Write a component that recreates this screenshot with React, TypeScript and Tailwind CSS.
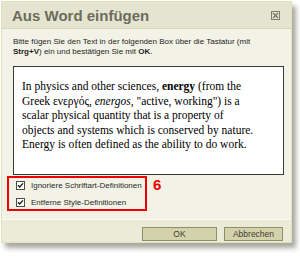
import React from 'react';

const CheckBox: React.FC = () => (
  <span className="w-[9px] h-[9px] border border-[#4d4d44] bg-white flex items-center justify-center shrink-0">
    <svg width="7" height="7" viewBox="0 0 7 7">
      <path d="M1 3.3 L2.7 5 L6 1.4" stroke="#1e1e1e" strokeWidth="1.4" fill="none" />
    </svg>
  </span>
);

const App: React.FC = () => {
  return (
    <div className="w-[300px] h-[258px] bg-white pt-[1px] pl-[1px] font-['Liberation_Sans',Arial,sans-serif]">
      <div className="w-[291px] h-[242px] flex flex-col bg-[#f3f2e6] border border-[#dfe3bd] shadow-[4px_5px_5px_rgba(60,60,40,0.45)]">
        {/* Title bar */}
        <div className="h-[27px] shrink-0 bg-[#e5e4d1] border-b border-dotted border-[#c9c9a6] flex items-center justify-between pl-[10px] pr-[11px]">
          <span className="text-[15px] font-bold text-[#6c6c5c] leading-none">Aus Word einfügen</span>
          <span className="w-[9px] h-[9px] border border-[#7f7f70] flex items-center justify-center">
            <svg width="7" height="7" viewBox="0 0 7 7">
              <path d="M1 1 L6 6 M6 1 L1 6" stroke="#6f6f60" strokeWidth="1.2" />
            </svg>
          </span>
        </div>

        {/* Body */}
        <div className="flex-1 pl-[11px] pr-[7px] pt-[8px]">
          <p className="text-[8px] leading-[9.5px] text-[#1f1f1f]">
            Bitte fügen Sie den Text in der folgenden Box über die Tastatur (mit
            <br />
            <b>Strg+V</b>) ein und bestätigen Sie mit <b>OK</b>.
          </p>
          <div className="mt-[10px] h-[109px] border border-[#3a3a36] bg-white pl-[8px] pt-[12px] font-['Liberation_Serif','Times_New_Roman',serif] text-[11.5px] leading-[14.5px] text-black">
            In physics and other sciences, <b>energy</b> (from the
            <br />
            Greek ενεργός, <i>energos</i>, "active, working") is a
            <br />
            scalar physical quantity that is a property of
            <br />
            objects and systems which is conserved by nature.
            <br />
            Energy is often defined as the ability to do work.
          </div>
          <div className="flex items-start mt-[1px] -ml-[6px]">
            <div className="w-[140px] h-[35px] border-2 border-[#ee0000] pl-[7px] pt-[3px] flex flex-col gap-[8px]">
              <label className="flex items-center gap-[6px] text-[8px] leading-[9px] text-[#2a2a2a]">
                <CheckBox />
                Ignoriere Schriftart-Definitionen
              </label>
              <label className="flex items-center gap-[6px] text-[8px] leading-[9px] text-[#2a2a2a]">
                <CheckBox />
                Entferne Style-Definitionen
              </label>
            </div>
            <span className="ml-[6px] mt-[1px] text-[15px] font-bold leading-[15px] text-[#ee0000]">6</span>
          </div>
        </div>

        {/* Footer */}
        <div className="h-[23px] shrink-0 bg-[#ecebd8] border-t border-[#fbfbf2] flex items-start justify-end gap-[7px] pr-[8px] pt-[7px]">
          <button className="w-[75px] h-[14px] bg-[#d4d2aa] border border-[#8e8d6c] text-[8.5px] leading-none text-[#3c3c34]">
            OK
          </button>
          <button className="w-[59px] h-[14px] bg-[#d4d2aa] border border-[#8e8d6c] text-[8.5px] leading-none text-[#3c3c34]">
            Abbrechen
          </button>
        </div>
      </div>
    </div>
  );
};

export default App;
